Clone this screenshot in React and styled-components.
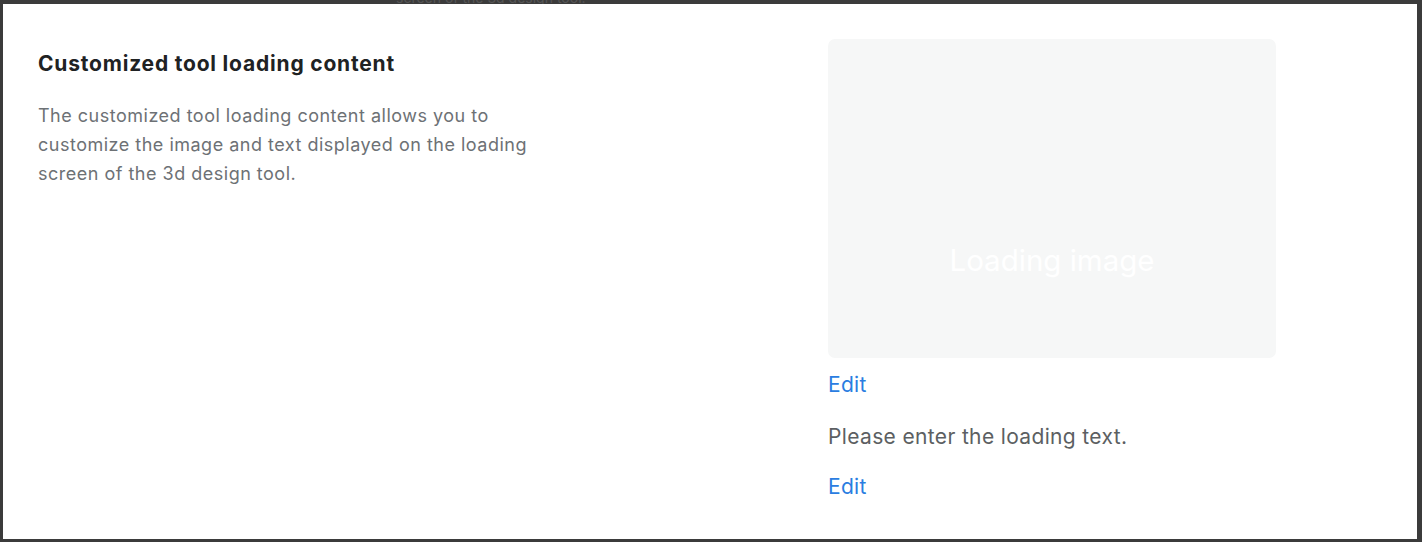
import React from "react";
import styled, { createGlobalStyle } from "styled-components";

const GlobalStyle = createGlobalStyle`
  html, body {
    margin: 0;
    padding: 0;
    background: #3b3b3b;
    font-family: Inter, "Noto Sans", sans-serif;
  }
`;

const Screen = styled.div`
  width: 1422px;
  height: 542px;
  overflow: hidden;
  background: #3b3b3b;
`;

const TopStrip = styled.div`
  height: 4px;
  overflow: hidden;
  position: relative;

  span {
    position: absolute;
    left: 396px;
    bottom: -1px;
    font-size: 14px;
    line-height: 14px;
    color: #555;
    white-space: nowrap;
  }
`;

const Frame = styled.div`
  margin: 0 5px 0 3px;
  height: 535px;
  background: #fff;
  display: grid;
  grid-template-columns: 825px 1fr;
  box-sizing: border-box;
`;

const Annotation = styled.section`
  padding: 46px 0 0 35px;
`;

const Title = styled.h2`
  margin: 0;
  font-size: 21px;
  line-height: 28px;
  font-weight: 700;
  letter-spacing: 0.8px;
  color: #202223;
`;

const Description = styled.p`
  margin: 23px 0 0;
  max-width: 500px;
  font-size: 18px;
  line-height: 29px;
  letter-spacing: 0.5px;
  color: #6d7175;
`;

const Content = styled.section`
  padding-top: 35px;
  display: flex;
  flex-direction: column;
  align-items: flex-start;
`;

const ImageBox = styled.div`
  width: 448px;
  height: 319px;
  border-radius: 7px;
  background: #f6f7f7;
  display: flex;
  justify-content: center;
  padding-top: 203px;
  box-sizing: border-box;
  color: #fff;
  font-size: 29.5px;
  line-height: 36px;
`;

const EditLink = styled.a`
  font-size: 21px;
  line-height: 28px;
  letter-spacing: 0.3px;
  color: #2a7de1;
  text-decoration: none;
  cursor: pointer;
  margin-top: ${(p) => p.$top}px;
`;

const LoadingText = styled.p`
  margin: 24px 0 0;
  font-size: 21px;
  line-height: 28px;
  letter-spacing: 0.35px;
  color: #5c5f62;
`;

export default function App() {
  return (
    <>
      <GlobalStyle />
      <Screen>
        <TopStrip>
          <span>screen of the 3d design tool.</span>
        </TopStrip>
        <Frame>
          <Annotation>
            <Title>Customized tool loading content</Title>
            <Description>
              The customized tool loading content allows you to customize the
              image and text displayed on the loading screen of the 3d design
              tool.
            </Description>
          </Annotation>
          <Content>
            <ImageBox>Loading image</ImageBox>
            <EditLink $top={13}>Edit</EditLink>
            <LoadingText>Please enter the loading text.</LoadingText>
            <EditLink $top={22}>Edit</EditLink>
          </Content>
        </Frame>
      </Screen>
    </>
  );
}
